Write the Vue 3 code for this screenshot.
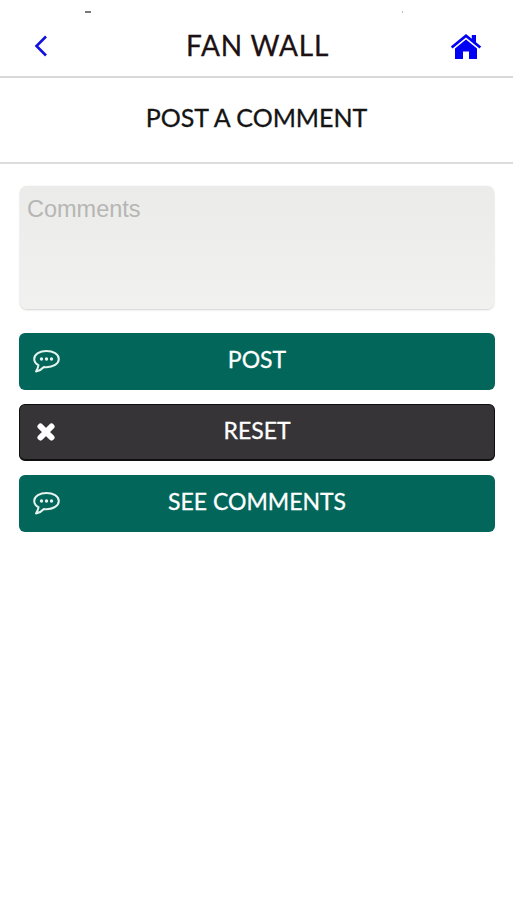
<template>
  <div class="page">
    <i class="status-mark mark-left"></i>
    <i class="status-mark mark-right"></i>

    <header class="top-bar">
      <button class="icon-btn" aria-label="Back">
        <svg width="16" height="24" viewBox="0 0 16 24">
          <path d="M13 2.5 3.5 12 13 21.5" fill="none" stroke="#1010e0" stroke-width="2.6" />
        </svg>
      </button>
      <h1 class="top-title">FAN WALL</h1>
      <button class="icon-btn home" aria-label="Home">
        <svg width="32" height="26" viewBox="0 0 32 26">
          <path d="M16 1 0.8 13.6l1.7 2L16 4.5l13.5 11.1 1.7-2L26 9.3V2h-4.2v3.8Z" fill="#0000f5" />
          <path d="M16 6.6 5 15.6V26h8v-7.5h6V26h8V15.6Z" fill="#0000f5" />
        </svg>
      </button>
    </header>

    <div class="sub-bar">POST A COMMENT</div>

    <main class="content">
      <textarea class="comment-box" placeholder="Comments"></textarea>

      <button v-for="btn in buttons" :key="btn.label" class="action" :class="btn.kind">
        <span class="action-icon">
          <svg v-if="btn.kind === 'green'" width="27" height="23" viewBox="0 0 27 23">
            <path d="M13.5 1C6.8 1 1.2 4.2 1.2 9c0 2.6 1.7 4.8 4.3 6.2-.2 1.9-1.1 3.9-2.5 6.3 3.2-.7 6-2.300 7.900-4.500 1 .2 1.700.2 2.600.2 6.700 0 12.300-3.400 12.300-8.200S20.200 1 13.500 1Z" fill="none" stroke="#e4f3ee" stroke-width="2" stroke-linejoin="round" />
            <circle cx="8.5" cy="9" r="1.7" fill="#e4f3ee" />
            <circle cx="13.5" cy="9" r="1.7" fill="#e4f3ee" />
            <circle cx="18.5" cy="9" r="1.7" fill="#e4f3ee" />
          </svg>
          <svg v-else width="20" height="20" viewBox="0 0 20 20">
            <path d="M4.5 4.5 15.5 15.500M15.500 4.500 4.500 15.500" fill="none" stroke="#fff" stroke-width="6" stroke-linecap="round" />
          </svg>
        </span>
        {{ btn.label }}
      </button>
    </main>
  </div>
</template>

<script setup>
const buttons = [
  { label: 'POST', kind: 'green' },
  { label: 'RESET', kind: 'dark' },
  { label: 'SEE COMMENTS', kind: 'green' }
]
</script>

<style scoped>
.page {
  position: relative;
  height: 900px;
  background: #fff;
  font-family: "Lato", "Noto Sans", sans-serif;
}

.status-mark {
  position: absolute;
  top: 11px;
  height: 2px;
  background: #777;
}

.mark-left {
  left: 85px;
  width: 6px;
}

.mark-right {
  left: 402px;
  width: 1px;
  background: #bbb;
}

.top-bar {
  height: 78px;
  padding: 16px 31px 0 33px;
  box-sizing: border-box;
  display: grid;
  grid-template-columns: 1fr auto 1fr;
  align-items: center;
  border-bottom: 2px solid #d8d8d8;
}

.icon-btn {
  padding: 0;
  border: 0;
  background: none;
  display: flex;
}

.home {
  justify-self: end;
}

.top-title {
  margin: 0 0 3px;
  font-size: 28px;
  font-weight: 400;
  letter-spacing: 0.8px;
  color: #1d1113;
  -webkit-text-stroke: 0.3px #1d1113;
}

.sub-bar {
  height: 86px;
  display: flex;
  align-items: center;
  justify-content: center;
  padding-bottom: 6px;
  box-sizing: border-box;
  border-bottom: 2px solid #dcdcdc;
  font-size: 25px;
  color: #141414;
  -webkit-text-stroke: 0.3px #141414;
}

.content {
  padding: 22px 18px 0 19px;
  display: flex;
  flex-direction: column;
}

.comment-box {
  display: block;
  height: 123px;
  margin: 0 1px 24px;
  padding: 10px 7px;
  box-sizing: border-box;
  border: 0;
  border-radius: 7px;
  resize: none;
  outline: none;
  background: linear-gradient(#ebebe9, #f1f2f0);
  box-shadow: 0 1px 2px #d2d2d2, 0 0 1px #d8d8d8;
  font-family: "Liberation Sans", Arial, sans-serif;
  font-size: 23.5px;
}

.comment-box::placeholder {
  color: #b6b6b4;
  opacity: 1;
}

.action {
  position: relative;
  height: 57px;
  margin-bottom: 14px;
  padding: 0 0 5px;
  border: 0;
  border-radius: 6px;
  color: #fff;
  font-family: inherit;
  font-size: 23px;
  -webkit-text-stroke: 0.3px #fff;
}

.green {
  background: #02665a;
}

.dark {
  background: #363436;
  border: 1px solid #0f0f0f;
  border-bottom-width: 2px;
  padding-bottom: 5px;
}

.action-icon {
  position: absolute;
  left: 14px;
  top: 17px;
  display: flex;
}

.dark .action-icon {
  left: 16px;
  top: 17px;
}
</style>
